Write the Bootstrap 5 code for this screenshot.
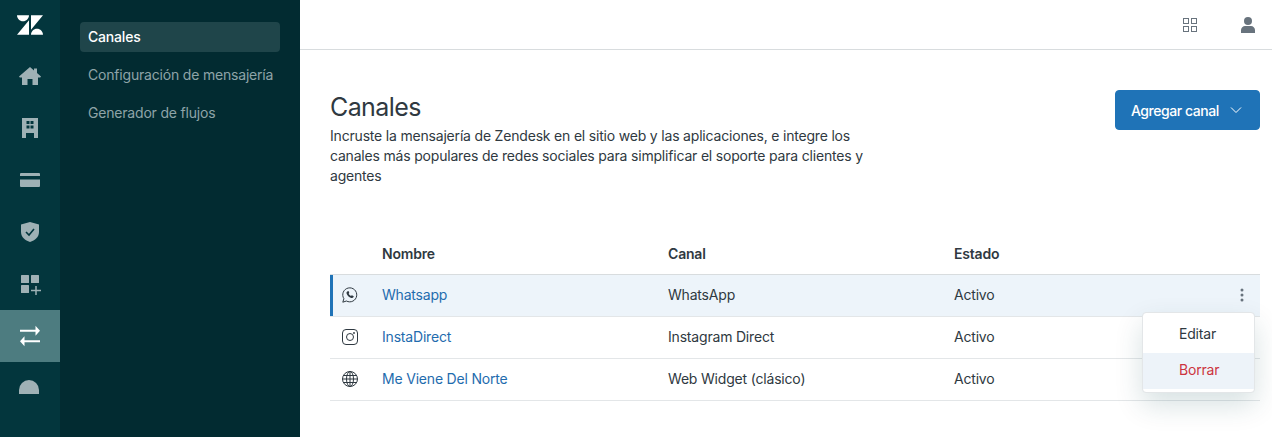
<!DOCTYPE html>
<html lang="es">
<head>
  <meta charset="UTF-8">
  <meta name="viewport" content="width=device-width, initial-scale=1.0">
  <title>Canales</title>
  <link href="https://cdn.jsdelivr.net/npm/bootstrap@5.3.3/dist/css/bootstrap.min.css" rel="stylesheet">
  <script src="https://cdn.jsdelivr.net/npm/bootstrap@5.3.3/dist/js/bootstrap.bundle.min.js"></script>
  <style>
    body { font-family: Inter, "Liberation Sans", sans-serif; font-size: 14px; letter-spacing: -.19px; color: #2f3941; overflow: hidden; }
    .app-shell { height: 437px; }
    .rail { width: 60px; background: #03363d; }
    .rail-logo { height: 50px; }
    .rail-item { height: 52px; color: #9fb1b5; }
    .rail-item.on { background: #4d7c80; color: #fff; }
    .rail-item svg { overflow: visible; }
    .rail-dome { margin: -2px 2px 0 0; }
    .subnav { width: 240px; background: #022b31; padding: 22px 20px 0; }
    .subnav-link { height: 30px; margin-bottom: 8px; padding: 0 8px; border-radius: 4px; color: #8ea4a8; line-height: 30px; text-decoration: none; white-space: nowrap; }
    .subnav-link.on { background: #1f454a; color: #fff; font-weight: 500; }
    .topbar { height: 50px; border-bottom: 1px solid #d8dcde; color: #68737d; padding-right: 16px; gap: 42px; }
    .content { padding: 40px 12px 0 30px; position: relative; }
    .page-title { font-size: 25px; line-height: 32px; font-weight: 400; letter-spacing: -.6px; margin: 1px 0 3px; }
    .page-desc { width: 540px; line-height: 20px; margin: 0; }
    .add-btn { width: 145px; height: 40px; padding: 0 17px 0 15px; white-space: nowrap; --bs-btn-bg: #1f73b7; --bs-btn-border-color: #1f73b7; --bs-btn-hover-bg: #1f73b7; --bs-btn-color: #fff; --bs-btn-font-size: 14px; --bs-btn-font-weight: 500; --bs-btn-border-radius: 4px; letter-spacing: -.45px; }
    .chan-table { table-layout: fixed; margin-top: 47px; width: 930px; --bs-table-color: #2f3941; --bs-table-border-color: #e3e6e8; }
    .chan-table th, .chan-table td { padding: 0; vertical-align: middle; }
    .chan-table thead th { height: 41px; font-weight: 600; border-bottom-color: #d8dcde; }
    .chan-table tbody td { height: 42px; padding-bottom: 2px; }
    .chan-table .col-icon { width: 52px; padding-left: 12px; padding-bottom: 0; line-height: 0; color: #2f3941; }
    .chan-table .col-main { width: 286px; }
    .chan-table a { color: #1f6cae; text-decoration: none; }
    .chan-table tr.row-on td { background: #edf4fa; box-shadow: none; }
    .chan-table tr.row-on td:first-child { box-shadow: inset 3px 0 0 #1f73b7; }
    .chan-table td.row-more { color: #68737d; padding: 0 16px 0 0; text-align: right; line-height: 0; }
    .row-menu { position: absolute; left: 842px; top: 262px; width: 113px; height: 81px; min-width: 0; padding: 4px 0 4px; border: 1px solid #e3e6e8; border-radius: 4px; box-shadow: 0 12px 28px rgba(4,68,77,.16); --bs-dropdown-font-size: 14px; }
    .row-menu .dropdown-item { height: 36px; line-height: 34px; padding: 0 0 0 36px; color: #2f3941; }
    .row-menu .dropdown-item.del { background: #edf3f9; color: #cc3340; }
  </style>
</head>
<body>
<div class="app-shell d-flex">
  <nav class="rail flex-shrink-0 d-flex flex-column">
    <div class="rail-logo d-flex align-items-center justify-content-center">
      <svg width="26" height="20" viewBox="0 3 26 19.7" fill="#fff"><path d="M12 8.2v14.5H0zM12 3c0 3.3-2.7 6-6 6S0 6.3 0 3zm2 19.7c0-3.3 2.7-6 6-6s6 2.7 6 6zm0-5V3h12z"/></svg>
    </div>
    <div class="rail-item d-flex align-items-center justify-content-center">
      <svg width="22" height="18" viewBox="0 0 22 18" fill="currentColor"><path d="M11 0 0 9.6l.8 1H3V18h5.5v-6h5v6H19v-7.4h2.2l.8-1L18 6.100V1.500h-3v2z"/></svg>
    </div>
    <div class="rail-item d-flex align-items-center justify-content-center">
      <svg width="16" height="20" viewBox="0 0 16 20" fill="currentColor"><path fill-rule="evenodd" d="M0 0h16v20h-4v-5H4v5H0zM4.500 3v3h3V3zm4 0v3h3V3zm-4 4.500v3h3v-3zm4 0v3h3v-3z"/></svg>
    </div>
    <div class="rail-item d-flex align-items-center justify-content-center">
      <svg width="20" height="14" viewBox="0 0 20 14" fill="currentColor"><path fill-rule="evenodd" d="M1 0h18a1 1 0 0 1 1 1v2H0V1a1 1 0 0 1 1-1zM0 6.500h20V13a1 1 0 0 1-1 1H1a1 1 0 0 1-1-1z"/></svg>
    </div>
    <div class="rail-item d-flex align-items-center justify-content-center">
      <svg width="18" height="20" viewBox="0 0 18 20"><path fill="currentColor" d="M9 0 18 2.500V10c0 5-4 8.500-9 10-5-1.500-9-5-9-10V2.500z"/><path fill="none" stroke="#03363d" stroke-width="1.600" d="m5 10 3 3 5-6"/></svg>
    </div>
    <div class="rail-item d-flex align-items-center justify-content-center">
      <svg width="20" height="20" viewBox="0 0 20 20" fill="currentColor"><rect x="1" y="1" width="8" height="8" rx=".5"/><rect x="11" y="1" width="8" height="8" rx=".5"/><rect x="1" y="11" width="8" height="8" rx=".5"/><path d="M15.250 12h1.500v3.750h4.250v1.500h-4.250V21h-1.500v-3.750H11v-1.500h4.250z"/></svg>
    </div>
    <div class="rail-item on d-flex align-items-center justify-content-center">
      <svg width="20" height="22" viewBox="0 0 20 22" fill="currentColor"><path d="M0 4.800h15.500V.8L20 5.800l-4.500 5v-4H0zM20 15.200H4.500v-4L0 16.200l4.500 5v-4H20z"/></svg>
    </div>
    <div class="rail-item d-flex align-items-center justify-content-center">
      <svg class="rail-dome" width="20" height="14" viewBox="0 0 20 14" fill="currentColor"><path d="M0 14v-4a10 10 0 0 1 20 0v4z"/></svg>
    </div>
  </nav>
  <nav class="subnav flex-shrink-0 d-flex flex-column">
    <a class="subnav-link on" href="#">Canales</a>
    <a class="subnav-link" href="#">Configuración de mensajería</a>
    <a class="subnav-link" href="#">Generador de flujos</a>
  </nav>
  <main class="flex-grow-1">
    <div class="topbar d-flex align-items-center justify-content-end">
      <svg width="16" height="16" viewBox="0 0 16 16" fill="none" stroke="currentColor"><rect x="1.500" y="1.500" width="5" height="5"/><rect x="9.500" y="1.500" width="5" height="5"/><rect x="1.500" y="9.500" width="5" height="5"/><rect x="9.500" y="9.500" width="5" height="5"/></svg>
      <svg width="16" height="16" viewBox="0 0 16 16" fill="currentColor"><circle cx="8" cy="4" r="4"/><path d="M1 16v-3c0-2 2-4 4-4h6c2 0 4 2 4 4v3z"/></svg>
    </div>
    <div class="content">
      <div class="d-flex justify-content-between align-items-start">
        <div>
          <h1 class="page-title">Canales</h1>
          <p class="page-desc">Incruste la mensajería de Zendesk en el sitio web y las aplicaciones, e integre los canales más populares de redes sociales para simplificar el soporte para clientes y agentes</p>
        </div>
        <button class="btn add-btn d-flex align-items-center justify-content-between" type="button">Agregar canal
          <svg width="12" height="12" viewBox="0 0 12 12" fill="none" stroke="currentColor"><path d="m1 3.500 5 5 5-5"/></svg>
        </button>
      </div>
      <table class="table chan-table">
        <thead>
          <tr><th class="col-icon"></th><th class="col-main">Nombre</th><th class="col-main">Canal</th><th class="col-main">Estado</th><th></th></tr>
        </thead>
        <tbody>
          <tr class="row-on">
            <td class="col-icon"><svg width="16" height="16" viewBox="0 0 16 16" fill="none" stroke="currentColor"><path d="M.8 15.200 1.900 11.700A7 7 0 1 1 4.400 14z"/><path fill="currentColor" stroke="none" d="M5.700 4.200c.4-.3.800-.2 1 .2l.5 1.100c.1.300 0 .6-.3.900l-.3.400c.5 1 1.300 1.800 2.400 2.300l.5-.5c.2-.2.500-.3.800-.2l1.100.6c.4.200.4.600.2 1-.5.900-1.400 1.200-2.300 1-2.400-.6-4.200-2.500-4.800-4.700-.2-.8.200-1.600 1.200-2.100z"/></svg></td>
            <td><a href="#">Whatsapp</a></td><td>WhatsApp</td><td>Activo</td>
            <td class="row-more"><svg width="4" height="14" viewBox="0 0 4 14" fill="currentColor"><circle cx="2" cy="2" r="1.500"/><circle cx="2" cy="7" r="1.500"/><circle cx="2" cy="12" r="1.500"/></svg></td>
          </tr>
          <tr>
            <td class="col-icon"><svg width="16" height="16" viewBox="0 0 16 16" fill="none" stroke="currentColor"><rect x=".5" y=".5" width="15" height="15" rx="3.500"/><circle cx="8" cy="8" r="3.500"/><circle cx="12" cy="4" r=".9" fill="currentColor" stroke="none"/></svg></td>
            <td><a href="#">InstaDirect</a></td><td>Instagram Direct</td><td>Activo</td><td></td>
          </tr>
          <tr>
            <td class="col-icon"><svg width="16" height="16" viewBox="0 0 16 16" fill="none" stroke="currentColor"><circle cx="8" cy="8" r="7.500"/><ellipse cx="8" cy="8" rx="3.500" ry="7.500"/><path d="M8 .5v15M.5 8h15M1.500 4.500h13M1.500 11.500h13"/></svg></td>
            <td><a href="#">Me Viene Del Norte</a></td><td>Web Widget (clásico)</td><td>Activo</td><td></td>
          </tr>
        </tbody>
      </table>
      <div class="dropdown-menu show row-menu">
        <a class="dropdown-item" href="#">Editar</a>
        <a class="dropdown-item del" href="#">Borrar</a>
      </div>
    </div>
  </main>
</div>
</body>
</html>
